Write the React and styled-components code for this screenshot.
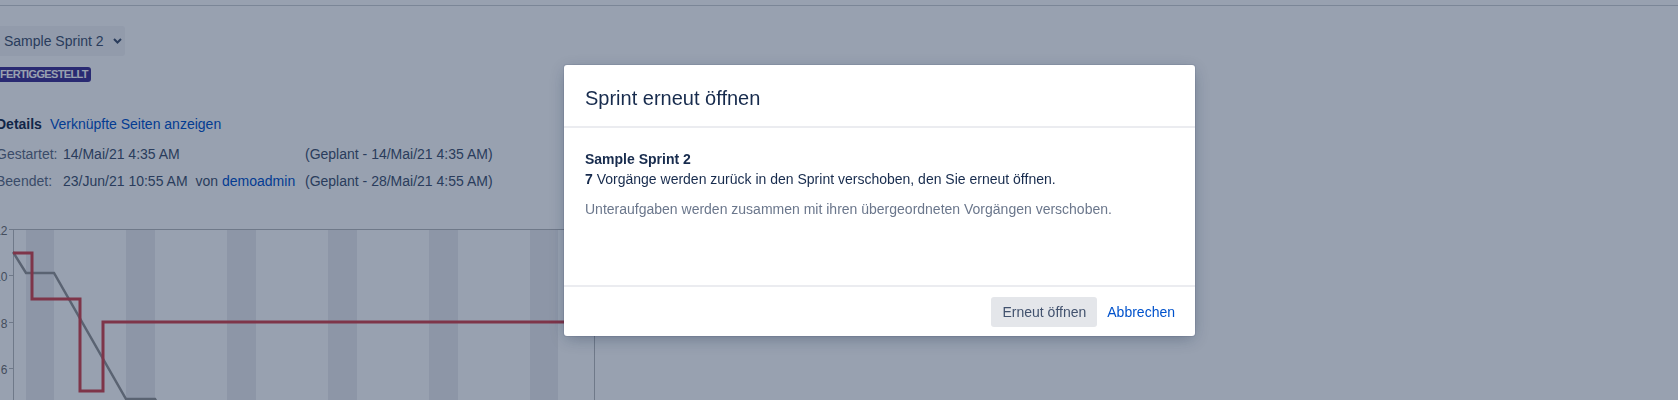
import React from 'react'
import styled, { createGlobalStyle } from 'styled-components'

const GlobalStyle = createGlobalStyle`
  html, body {
    margin: 0;
    padding: 0;
    background: #fff;
    overflow: hidden;
  }
  body {
    font-family: "Liberation Sans", Arial, sans-serif;
    font-size: 14px;
    color: #172b4d;
  }
`;

const Page = styled.div`
  width: 1678px;
  height: 400px;
  overflow: hidden;
`;

const TopBar = styled.div`
  height: 5px;
  border-bottom: 1px solid #cdd0d5;
`;

const Content = styled.div`
  margin-left: -4px;
  padding-top: 20px;
`;

const SprintPicker = styled.button`
  display: flex;
  align-items: center;
  gap: 9px;
  height: 30px;
  width: 129px;
  padding: 0 0 0 8px;
  border: none;
  border-radius: 3px;
  background: #f4f5f7;
  color: #42526e;
  font-family: inherit;
  font-size: 14px;
  cursor: pointer;
`;

const Lozenge = styled.span`
  display: inline-block;
  margin-top: 11px;
  height: 15px;
  line-height: 15px;
  padding: 0 3px 0 4px;
  border-radius: 3px;
  background: #403294;
  color: #fff;
  font-size: 11px;
  font-weight: 700;
  letter-spacing: -0.65px;
  text-transform: uppercase;
`;

const DetailsRow = styled.div`
  display: flex;
  gap: 8px;
  margin-top: 32px;
  line-height: 20px;
`;

const Strong = styled.span`
  font-weight: 700;
  color: #172b4d;
`;

const Link = styled.a`
  color: #0052cc;
  text-decoration: none;
`;

const DateGrid = styled.div`
  display: grid;
  grid-template-columns: 67px 242px auto;
  row-gap: 7px;
  margin-top: 10px;
  line-height: 20px;
  color: #42526e;
`;

const Label = styled.span`
  color: #5e6c84;
`;

const By = styled.span`
  margin-left: 8px;
`;

const ChartBox = styled.div`
  margin-top: 20px;
  height: 190px;
`;

const Blanket = styled.div`
  position: fixed;
  inset: 0;
  background: rgba(9, 30, 66, 0.42);
`;

const Dialog = styled.section`
  position: fixed;
  top: 65px;
  left: 564px;
  width: 631px;
  background: #fff;
  border-radius: 3px;
  box-shadow: 0 0 0 1px rgba(9, 30, 66, 0.08), 0 4px 16px -2px rgba(9, 30, 66, 0.32);
`;

const DialogHeader = styled.header`
  padding: 21px 21px 16px;
  border-bottom: 2px solid #ebecf0;
`;

const Title = styled.h2`
  margin: 0;
  font-size: 20px;
  font-weight: 400;
  line-height: 24px;
  color: #172b4d;
`;

const DialogBody = styled.div`
  box-sizing: border-box;
  height: 157px;
  padding: 21px 21px 0;
  line-height: 20px;
`;

const Para = styled.p`
  margin: ${p => (p.$gap ? '10px' : '0')} 0 0;
  color: ${p => (p.$muted ? '#6b778c' : '#172b4d')};
`;

const Bold = styled.b`
  font-weight: 700;
`;

const DialogFooter = styled.footer`
  display: flex;
  justify-content: flex-end;
  align-items: center;
  gap: 10px;
  padding: 10px 20px 9px;
  border-top: 2px solid #ebecf0;
`;

const Button = styled.button`
  height: 30px;
  padding: 0 ${p => (p.$link ? '0' : '11px')};
  border: none;
  border-radius: 3px;
  background: ${p => (p.$link ? 'transparent' : '#e4e6ea')};
  color: ${p => (p.$link ? '#0052cc' : '#42526e')};
  font-family: inherit;
  font-size: 14px;
  cursor: pointer;
`;

const bands = [[26, 28], [126, 29], [227, 29], [328, 29], [429, 29], [530, 28]];
const ticks = [[228, '12'], [274, '10'], [321, '8'], [367, '6']];

function Chevron() {
  return (
    <svg width="9" height="6" viewBox="0 0 9 6">
      <path d="M1 1l3.5 3.5L8 1" fill="none" stroke="#42526e" strokeWidth="2" />
    </svg>
  );
}

function BurndownChart() {
  return (
    <svg width="604" height="190" viewBox="-4 210 604 190">
      {bands.map(([x, w]) => (
        <rect key={x} x={x} y="228" width={w} height="172" fill="#ededf0" />
      ))}
      <path d="M13 228.5H594.5V400M13.5 228V400" fill="none" stroke="#b9babc" strokeWidth="1" />
      {ticks.map(([y, t]) => (
        <g key={t}>
          <line x1="9" x2="13" y1={y + 0.5} y2={y + 0.5} stroke="#b9babc" />
          <text x="7.5" y={y + 6} textAnchor="end" fontSize="12" fill="#707070" fontFamily="Liberation Sans, Arial, sans-serif">{t}</text>
        </g>
      ))}
      <polyline points="13,251 26,272 54,272 126,398 155,398 168,420" fill="none" stroke="#959595" strokeWidth="2.5" />
      <polyline points="13,252 32,252 32,298 80,298 80,390 103,390 103,321 594,321" fill="none" stroke="#d2454e" strokeWidth="3" />
    </svg>
  );
}

export default function App() {
  return (
    <>
      <GlobalStyle />
      <Page>
        <TopBar />
        <Content>
          <SprintPicker>
            Sample Sprint 2 <Chevron />
          </SprintPicker>
          <Lozenge>Fertiggestellt</Lozenge>
          <DetailsRow>
            <Strong>Details</Strong>
            <Link href="#">Verknüpfte Seiten anzeigen</Link>
          </DetailsRow>
          <DateGrid>
            <Label>Gestartet:</Label>
            <span>14/Mai/21 4:35 AM</span>
            <span>(Geplant - 14/Mai/21 4:35 AM)</span>
            <Label>Beendet:</Label>
            <span>
              23/Jun/21 10:55 AM<By>von <Link href="#">demoadmin</Link></By>
            </span>
            <span>(Geplant - 28/Mai/21 4:55 AM)</span>
          </DateGrid>
          <ChartBox>
            <BurndownChart />
          </ChartBox>
        </Content>
      </Page>
      <Blanket />
      <Dialog>
        <DialogHeader>
          <Title>Sprint erneut öffnen</Title>
        </DialogHeader>
        <DialogBody>
          <Para><Bold>Sample Sprint 2</Bold></Para>
          <Para><Bold>7</Bold> Vorgänge werden zurück in den Sprint verschoben, den Sie erneut öffnen.</Para>
          <Para $gap $muted>Unteraufgaben werden zusammen mit ihren übergeordneten Vorgängen verschoben.</Para>
        </DialogBody>
        <DialogFooter>
          <Button>Erneut öffnen</Button>
          <Button $link>Abbrechen</Button>
        </DialogFooter>
      </Dialog>
    </>
  );
}
